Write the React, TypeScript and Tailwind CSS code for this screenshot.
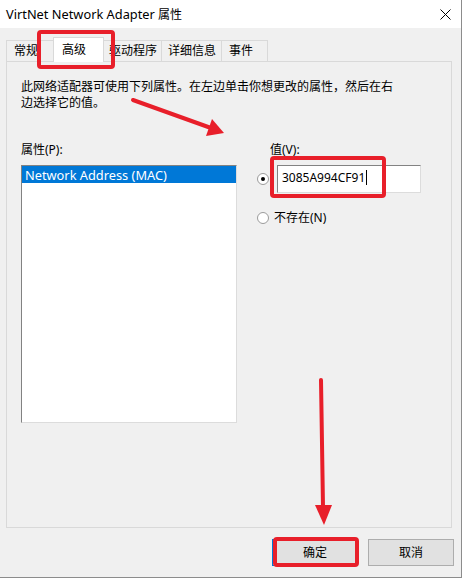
import React from 'react'

const RED = '#e81f2a'

function Radio({ checked }: { checked?: boolean }) {
  return (
    <svg width="12" height="12" viewBox="0 0 12 12" className="shrink-0">
      <circle cx="6" cy="6" r="5.5" fill="#fff" stroke="#9a9a9a" />
      {checked && <circle cx="6" cy="6" r="2" fill="#000" />}
    </svg>
  )
}

export default function App() {
  return (
    <div className="relative w-[463px] h-[579px] bg-white text-[12px] leading-[16px] text-black font-['Noto_Sans','Noto_Sans_CJK_SC',sans-serif]">
      <div className="w-[462px] h-[578px] border-r border-b border-[#8c8c8c] bg-[#f0f0f0] flex flex-col">
        {/* Title bar */}
        <div className="h-[28px] bg-white flex items-center justify-between pl-[6px] pr-[10px] shrink-0">
          <span><span className="text-[12.8px]">VirtNet Network Adapter</span> 属性</span>
          <svg width="11" height="11" viewBox="0 0 11 11">
            <path d="M0.5 0.5 L10.5 10.5 M10.5 0.5 L0.5 10.5" stroke="#000" strokeWidth="1" />
          </svg>
        </div>

        <div className="pt-[9px] pl-[6px] pr-[9px]">
          {/* Tabs */}
          <div className="flex items-end h-[24px]">
            <div className="w-[47px] h-[21px] border-t border-l border-[#d9d9d9] pl-[7px] flex items-center">常规</div>
            <div className="relative z-10 w-[51px] h-[25px] -mb-px bg-white border border-b-0 border-[#d9d9d9] pl-[8px] flex items-center">高级</div>
            <div className="w-[58px] h-[21px] border-t border-r border-[#d9d9d9] pl-[5px] flex items-center">驱动程序</div>
            <div className="w-[60px] h-[21px] border-t border-r border-[#d9d9d9] pl-[6px] flex items-center">详细信息</div>
            <div className="w-[46px] h-[21px] border-t border-r border-[#d9d9d9] pl-[7px] flex items-center">事件</div>
          </div>

          {/* Tab page */}
          <div className="h-[467px] border border-[#d9d9d9] pl-[14px] pt-[17px]">
            <p className="w-[380px]">此网络适配器可使用下列属性。在左边单击你想更改的属性，然后在右边选择它的值。</p>

            <div className="flex mt-[31px]">
              <div className="w-[216px]">
                <div>属性(P):</div>
                <div className="mt-[7px] h-[258px] bg-white border border-t-[#828282] border-l-[#828282] border-r-[#dcdcdc] border-b-[#dcdcdc]">
                  <div className="h-[17px] bg-[#0078d7] text-white text-[12.8px] pl-[3px] flex items-center">Network Address (MAC)</div>
                </div>
              </div>

              <div className="ml-[20px]">
                <div className="pl-[13px]">值(V):</div>
                <div className="mt-[7px] flex items-center gap-[8px]">
                  <Radio checked />
                  <div className="w-[144px] h-[28px] bg-white border border-t-[#828282] border-l-[#828282] border-r-[#dcdcdc] border-b-[#dcdcdc] pl-[4px] pb-[3px] flex items-center">
                    <span>3085A994CF91</span>
                    <span className="ml-[1px] w-px h-[15px] bg-black" />
                  </div>
                </div>
                <div className="mt-[17px] flex items-center gap-[5px]">
                  <Radio />
                  <span>不存在(N)</span>
                </div>
              </div>
            </div>
          </div>
        </div>

        {/* Buttons */}
        <div className="mt-[11px] flex justify-end gap-[10px] pr-[7px]">
          <button className="w-[86px] h-[27px] bg-[#e1e1e1] border border-[#0078d7] flex items-center justify-center">确定</button>
          <button className="w-[86px] h-[27px] bg-[#e1e1e1] border border-[#adadad] flex items-center justify-center">取消</button>
        </div>
      </div>

      {/* Red annotations */}
      <svg className="absolute inset-0 pointer-events-none" width="463" height="579" viewBox="0 0 463 579">
        <rect x="39" y="32" width="74" height="35" rx="2" fill="none" stroke={RED} strokeWidth="4" />
        <rect x="272" y="158" width="112" height="38" rx="2" fill="none" stroke={RED} strokeWidth="4" />
        <rect x="275" y="539" width="82" height="26" rx="2" fill="none" stroke={RED} strokeWidth="4" />
        <line x1="133" y1="100" x2="211" y2="128" stroke={RED} strokeWidth="4" strokeLinecap="round" />
        <polygon points="224,133 206,136 212,119" fill={RED} />
        <line x1="321" y1="380" x2="323" y2="507" stroke={RED} strokeWidth="4" strokeLinecap="round" />
        <polygon points="315,505 332,505 324,525" fill={RED} />
      </svg>
    </div>
  )
}
